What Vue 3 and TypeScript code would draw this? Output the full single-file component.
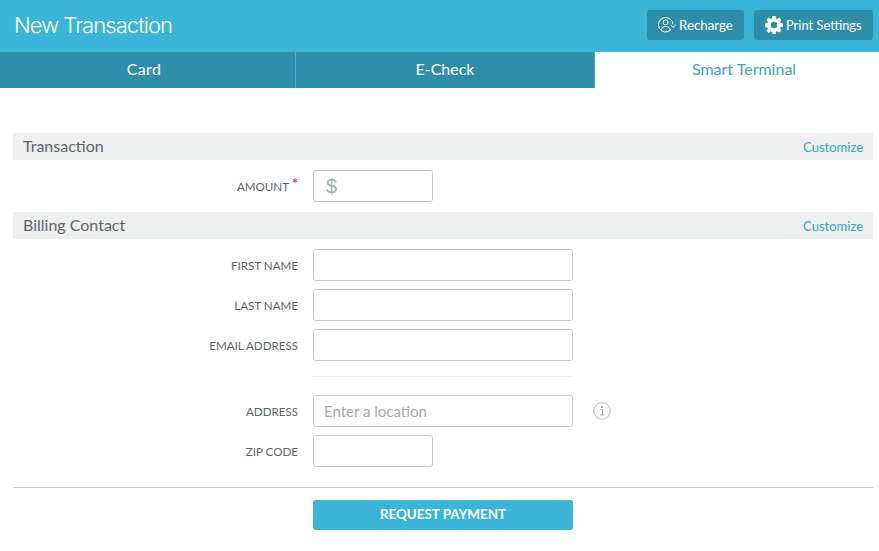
<script setup lang="ts">
const tabs = [
  { label: 'Card', cls: 'tab-card' },
  { label: 'E-Check', cls: 'tab-check' },
  { label: 'Smart Terminal', cls: 'tab-smart' },
]
const contact = ['FIRST NAME', 'LAST NAME', 'EMAIL ADDRESS']
</script>

<template>
  <div class="page">
    <header class="top">
      <h1 class="title">New Transaction</h1>
      <div class="actions">
        <button class="act act-recharge">
          <svg width="19" height="16" viewBox="0 0 19 16" fill="none" stroke="#fff" stroke-width="1" stroke-linecap="round" stroke-linejoin="round">
            <path d="M15 7A7.3 7.3 0 1 0 12.6 13.2" />
            <circle cx="7.6" cy="5.4" r="2.5" />
            <path d="M3.2 13c.3-2.3 2.1-3.6 4.4-3.6s4 1.2 4.4 3.3" />
            <path d="M13 8.2l2.1 2.3 2.4-2.3" />
          </svg>
          <span>Recharge</span>
        </button>
        <button class="act act-print">
          <svg width="18" height="18" viewBox="0 0 18 18">
            <path fill="#fff" fill-rule="evenodd" d="M7.4 0h3.2l.4 2.4 1.3.6 2-1.4 2.2 2.3-1.4 2 .5 1.2 2.4.4v3.2l-2.4.4-.5 1.3 1.4 2-2.2 2.2-2-1.4-1.3.5-.4 2.3H7.4L7 16l-1.3-.5-2 1.4-2.2-2.2 1.4-2-.5-1.3L0 10.9V7.5l2.4-.4.5-1.2-1.4-2 2.2-2.3 2 1.4L7 2.4zM9 5.8a3.2 3.2 0 1 0 0 6.4 3.2 3.2 0 0 0 0-6.4z" />
          </svg>
          <span>Print Settings</span>
        </button>
      </div>
    </header>

    <nav class="tabs">
      <div v-for="t in tabs" :key="t.label" class="tab" :class="t.cls">{{ t.label }}</div>
    </nav>

    <main class="body">
      <div class="bar bar-first">
        <span class="bar-title">Transaction</span>
        <a class="bar-link">Customize</a>
      </div>
      <div class="row row-amount">
        <label class="lbl lbl-req">AMOUNT<span class="req">*</span></label>
        <div class="field short money"><span class="dollar">$</span></div>
      </div>

      <div class="bar bar-second">
        <span class="bar-title">Billing Contact</span>
        <a class="bar-link">Customize</a>
      </div>
      <div class="stack">
        <div v-for="c in contact" :key="c" class="row">
          <label class="lbl">{{ c }}</label>
          <div class="field long"></div>
        </div>
      </div>
      <div class="rule-wrap"><div class="rule"></div></div>
      <div class="stack">
        <div class="row">
          <label class="lbl">ADDRESS</label>
          <div class="field long"><span class="ph">Enter a location</span></div>
          <svg class="info" width="18" height="18" viewBox="0 0 18 18" fill="none">
            <circle cx="9" cy="9" r="8.3" stroke="#b3bcc2" stroke-width="1" />
            <circle cx="9" cy="5.2" r="1" fill="#9aa5ac" />
            <path d="M7.3 7.8H9.5V12.8M7.3 13h4" stroke="#9aa5ac" stroke-width="1.1" />
          </svg>
        </div>
        <div class="row">
          <label class="lbl">ZIP CODE</label>
          <div class="field short"></div>
        </div>
      </div>
      <div class="foot">
        <button class="submit">REQUEST PAYMENT</button>
      </div>
    </main>
  </div>
</template>

<style scoped>
.page {
  width: 879px;
  height: 551px;
  overflow: hidden;
  background: #fff;
  font-family: Lato, "Open Sans", sans-serif;
  color: #5f6468;
}
.top {
  height: 52px;
  background: #3ab4d7;
  display: flex;
  align-items: center;
  justify-content: space-between;
  padding: 0 6px 2px 14px;
  box-sizing: border-box;
}
.title {
  margin: 0;
  font-family: Inter, sans-serif;
  font-weight: 300;
  font-size: 22px;
  letter-spacing: -0.95px;
  color: #fff;
}
.actions {
  display: flex;
  gap: 10px;
}
.act {
  height: 30px;
  border: 0;
  border-radius: 3px;
  background: #2e8ea9;
  color: #fff;
  font-family: inherit;
  font-size: 13.3px;
  display: flex;
  align-items: center;
  padding: 0;
}
.act-recharge {
  width: 97px;
  padding-left: 11px;
  gap: 2px;
}
.act-print {
  width: 119px;
  padding-left: 11px;
  gap: 3px;
  font-size: 12.9px;
}
.tabs {
  display: flex;
  height: 36px;
}
.tab {
  display: flex;
  align-items: center;
  justify-content: center;
  font-size: 16px;
  color: #fff;
  background: #2e8ea9;
  padding-bottom: 3px;
  box-sizing: border-box;
}
.tab-card {
  width: 296px;
  border-right: 1px solid #3ab4d7;
  padding-right: 7px;
  letter-spacing: 0.4px;
}
.tab-check {
  width: 299px;
  border-right: 1px solid #3ab4d7;
}
.tab-smart {
  flex: 1;
  background: #fff;
  color: #3aa5c4;
  padding-left: 14px;
}
.body {
  padding: 0 6px 0 13px;
}
.bar {
  height: 27px;
  background: #eeefef;
  display: flex;
  align-items: center;
  justify-content: space-between;
  padding: 0 10px;
}
.bar-first {
  margin-top: 45px;
}
.bar-second {
  margin-top: 10px;
}
.bar-title {
  font-size: 16px;
  color: #5f6468;
  margin-top: -2px;
}
.bar-link {
  font-size: 13px;
  color: #3aa5c4;
}
.row {
  display: flex;
  align-items: center;
  height: 32px;
}
.row-amount {
  margin-top: 10px;
}
.lbl {
  width: 285px;
  text-align: right;
  font-size: 11.6px;
  color: #5f6468;
  margin-right: 15px;
  white-space: nowrap;
}
.lbl-req {
  padding-right: 9px;
  box-sizing: border-box;
  position: relative;
}
.req {
  position: absolute;
  right: 0;
  top: -4px;
  color: #f0475e;
  font-size: 15px;
  font-weight: 700;
  line-height: 1;
}
.field {
  height: 32px;
  box-sizing: border-box;
  border: 1px solid #c8cccd;
  border-radius: 3px;
  background: #fff;
  display: flex;
  align-items: center;
  padding-left: 10px;
}
.short {
  width: 120px;
}
.long {
  width: 260px;
}
.dollar {
  font-family: "Liberation Sans", sans-serif;
  font-size: 20px;
  color: #a5aeb4;
  padding-left: 2px;
}
.ph {
  font-size: 15px;
  color: #a9a9a9;
}
.info {
  margin-left: 20px;
}
.stack {
  margin-top: 10px;
  display: flex;
  flex-direction: column;
  gap: 8px;
}
.rule-wrap {
  padding-left: 300px;
  margin-top: 15px;
}
.rule {
  width: 260px;
  height: 1px;
  background: #eeefef;
}
.rule-wrap + .stack {
  margin-top: 18px;
}
.foot {
  margin-top: 20px;
  border-top: 1px solid #c9cccc;
  padding: 12px 0 0 300px;
}
.submit {
  width: 260px;
  height: 30px;
  border: 0;
  border-radius: 3px;
  background: #3ab4d7;
  color: #fff;
  font-family: inherit;
  font-size: 13.4px;
  font-weight: 700;
  padding: 0 0 2px;
}
</style>
